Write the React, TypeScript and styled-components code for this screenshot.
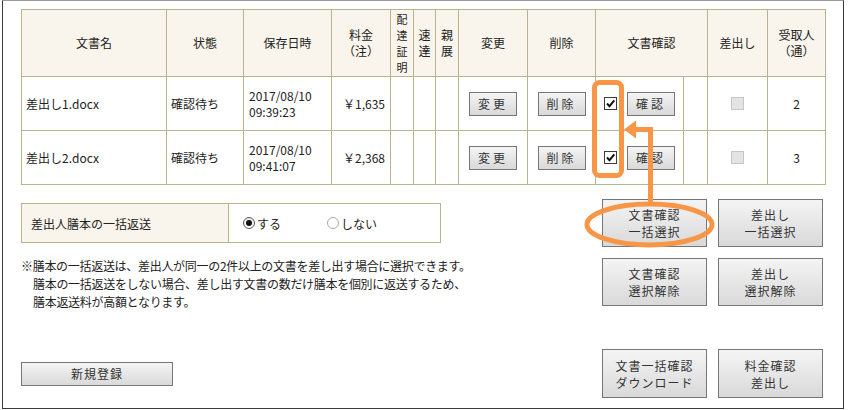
import React from "react";
import styled, { createGlobalStyle } from "styled-components";

const B = "#b9b48f";
const CREAM = "#f9f5ec";
const ORANGE = "#f79646";

const GlobalStyle = createGlobalStyle`
  html, body { margin: 0; padding: 0; background: #fff; }
  body {
    font-family: "Noto Sans CJK JP", "Noto Sans", sans-serif;
    font-size: 12px;
    color: #222;
  }
  * { box-sizing: border-box; }
`;

const Page = styled.div`
  position: relative;
  width: 848px;
  height: 410px;
  overflow: hidden;
`;

const Frame = styled.div`
  margin-left: 2px;
  width: 842px;
  height: 409px;
  border: 1px solid #3a3a3a;
  border-top-color: #9a9a9a;
  padding: 8px 17px 10px 18px;
  display: flex;
  flex-direction: column;
`;

const Grid = styled.div`
  display: grid;
  grid-template-columns: 145px 77px 88px 59px 23px 22px 23px 69px 68px 88px 24px 60px 58px;
  grid-template-rows: 67px 54px 54px;
  border-top: 1px solid ${B};
  border-left: 1px solid ${B};
  width: 805px;
`;

const Cell = styled.div<{ $align?: "left" | "center" | "right"; $pl?: number; $pr?: number }>`
  border-right: 1px solid ${B};
  border-bottom: 1px solid ${B};
  display: flex;
  align-items: center;
  justify-content: ${(p) =>
    p.$align === "right" ? "flex-end" : p.$align === "center" ? "center" : "flex-start"};
  padding-left: ${(p) => p.$pl ?? 0}px;
  padding-right: ${(p) => p.$pr ?? 0}px;
  line-height: 16px;
  white-space: nowrap;
`;

const HeadCell = styled.div<{ $span?: number; $small?: boolean }>`
  grid-column: span ${(p) => p.$span ?? 1};
  border-right: 1px solid ${B};
  border-bottom: 1px solid ${B};
  background: ${CREAM};
  display: flex;
  align-items: center;
  justify-content: center;
  text-align: center;
  font-size: ${(p) => (p.$small ? 11 : 12)}px;
  line-height: 16px;
  white-space: nowrap;
`;

const Btn = styled.button<{ $w: number; $h: number; $ls?: number }>`
  width: ${(p) => p.$w}px;
  height: ${(p) => p.$h}px;
  padding: 0;
  border: 1px solid #767676;
  background: linear-gradient(#f4f4f4, #d9d9d9);
  font-family: inherit;
  font-size: 12px;
  line-height: 17px;
  letter-spacing: ${(p) => p.$ls ?? 1}px;
  color: #333;
  flex-shrink: 0;
`;

const CheckBox = styled.span<{ $disabled?: boolean }>`
  width: 13px;
  height: 13px;
  display: inline-flex;
  align-items: center;
  justify-content: center;
  border: 1px solid ${(p) => (p.$disabled ? "#c6c6c6" : "#3c3c3c")};
  background: ${(p) => (p.$disabled ? "#e4e4e4" : "#fff")};
  flex-shrink: 0;
`;

const ConfirmCell = styled(Cell)`
  gap: 10px;
`;

const Lower = styled.div`
  display: flex;
  justify-content: space-between;
  margin-top: 14px;
`;

const LeftCol = styled.div`
  padding-top: 4px;
  display: flex;
  flex-direction: column;
`;

const OptionBox = styled.div`
  display: grid;
  grid-template-columns: 207px 1fr;
  width: 420px;
  height: 40px;
  border: 1px solid ${B};
`;

const OptionLabel = styled.div`
  background: ${CREAM};
  border-right: 1px solid ${B};
  display: flex;
  align-items: center;
  padding-left: 9px;
`;

const OptionChoices = styled.div`
  display: flex;
  align-items: center;
  padding-left: 14px;
  gap: 46px;
`;

const RadioItem = styled.label`
  display: inline-flex;
  align-items: center;
  gap: 2px;
`;

const RadioDot = styled.span<{ $on?: boolean }>`
  width: 12px;
  height: 12px;
  border-radius: 50%;
  border: 1px solid ${(p) => (p.$on ? "#5a5a5a" : "#a8a8a8")};
  background: ${(p) => (p.$on ? "linear-gradient(#e8e8e8, #fff)" : "#fff")};
  display: inline-flex;
  align-items: center;
  justify-content: center;
  &::after {
    content: "";
    width: 6px;
    height: 6px;
    border-radius: 50%;
    background: ${(p) => (p.$on ? "#111" : "transparent")};
  }
`;

const Note = styled.div`
  margin-top: 14px;
  line-height: 18px;
  letter-spacing: -0.3px;
  color: #222;
`;

const NoteLine = styled.div<{ $indent?: boolean }>`
  padding-left: ${(p) => (p.$indent ? 12 : 0)}px;
  white-space: nowrap;
`;

const ButtonGrid = styled.div`
  display: grid;
  grid-template-columns: 105px 105px;
  grid-auto-rows: 48px;
  column-gap: 11px;
  row-gap: 11px;
  margin-right: 3px;
`;

const BottomRow = styled.div`
  margin-top: auto;
  display: flex;
  align-items: center;
  justify-content: space-between;
`;

const BottomButtons = styled.div`
  display: flex;
  gap: 11px;
  margin-right: 3px;
`;

const Overlay = styled.svg`
  position: absolute;
  left: 0;
  top: 0;
  pointer-events: none;
`;

const Check = () => (
  <CheckBox>
    <svg width="11" height="11" viewBox="0 0 11 11">
      <path d="M2 5.5 L4.5 8.2 L9.3 2.3" fill="none" stroke="#111" strokeWidth="1.9" />
    </svg>
  </CheckBox>
);

const rows = [
  { name: "差出し1.docx", date: "2017/08/10", time: "09:39:23", price: "￥1,635", count: "2" },
  { name: "差出し2.docx", date: "2017/08/10", time: "09:41:07", price: "￥2,368", count: "3" },
];

export default function App() {
  return (
    <Page>
      <GlobalStyle />
      <Frame>
        <Grid>
          <HeadCell>文書名</HeadCell>
          <HeadCell>状態</HeadCell>
          <HeadCell>保存日時</HeadCell>
          <HeadCell>
            料金
            <br />
            （注）
          </HeadCell>
          <HeadCell $small>
            配<br />達<br />証<br />明
          </HeadCell>
          <HeadCell>
            速<br />達
          </HeadCell>
          <HeadCell>
            親<br />展
          </HeadCell>
          <HeadCell>変更</HeadCell>
          <HeadCell>削除</HeadCell>
          <HeadCell $span={2}>文書確認</HeadCell>
          <HeadCell>差出し</HeadCell>
          <HeadCell>
            受取人
            <br />
            （通）
          </HeadCell>
          {rows.map((r) => (
            <React.Fragment key={r.name}>
              <Cell $pl={4}>{r.name}</Cell>
              <Cell $pl={4}>確認待ち</Cell>
              <Cell $pl={5}>
                <div>
                  {r.date}
                  <br />
                  {r.time}
                </div>
              </Cell>
              <Cell $align="right" $pr={5}>
                {r.price}
              </Cell>
              <Cell />
              <Cell />
              <Cell />
              <Cell $align="center">
                <Btn $w={48} $h={24} $ls={3}>
                  変更
                </Btn>
              </Cell>
              <Cell $align="center">
                <Btn $w={48} $h={24} $ls={3}>
                  削除
                </Btn>
              </Cell>
              <ConfirmCell $pl={8}>
                <Check />
                <Btn $w={48} $h={24} $ls={3}>
                  確認
                </Btn>
              </ConfirmCell>
              <Cell />
              <Cell $align="center">
                <CheckBox $disabled />
              </Cell>
              <Cell $align="center">{r.count}</Cell>
            </React.Fragment>
          ))}
        </Grid>

        <Lower>
          <LeftCol>
            <OptionBox>
              <OptionLabel>差出人膳本の一括返送</OptionLabel>
              <OptionChoices>
                <RadioItem>
                  <RadioDot $on />
                  する
                </RadioItem>
                <RadioItem>
                  <RadioDot />
                  しない
                </RadioItem>
              </OptionChoices>
            </OptionBox>
            <Note>
              <NoteLine>※膳本の一括返送は、差出人が同一の2件以上の文書を差し出す場合に選択できます。</NoteLine>
              <NoteLine $indent>膳本の一括返送をしない場合、差し出す文書の数だけ膳本を個別に返送するため、</NoteLine>
              <NoteLine $indent>膳本返送料が高額となります。</NoteLine>
            </Note>
          </LeftCol>
          <ButtonGrid>
            <Btn $w={105} $h={48}>
              文書確認
              <br />
              一括選択
            </Btn>
            <Btn $w={105} $h={48}>
              差出し
              <br />
              一括選択
            </Btn>
            <Btn $w={105} $h={48}>
              文書確認
              <br />
              選択解除
            </Btn>
            <Btn $w={105} $h={48}>
              差出し
              <br />
              選択解除
            </Btn>
          </ButtonGrid>
        </Lower>

        <BottomRow>
          <Btn $w={152} $h={24}>
            新規登録
          </Btn>
          <BottomButtons>
            <Btn $w={105} $h={49}>
              文書一括確認
              <br />
              ダウンロード
            </Btn>
            <Btn $w={105} $h={49}>
              料金確認
              <br />
              差出し
            </Btn>
          </BottomButtons>
        </BottomRow>
      </Frame>

      <Overlay width="848" height="410" viewBox="0 0 848 410">
        <rect
          x="594.5"
          y="82.5"
          width="27"
          height="93"
          rx="5"
          fill="none"
          stroke={ORANGE}
          strokeWidth="5"
        />
        <path d="M650.5 203 V129.5 H634" fill="none" stroke={ORANGE} strokeWidth="5" />
        <polygon points="624,129.5 636,120.5 636,138.5" fill={ORANGE} />
        <ellipse
          cx="649.5"
          cy="224.5"
          rx="62.5"
          ry="20.5"
          fill="none"
          stroke={ORANGE}
          strokeWidth="5"
        />
      </Overlay>
    </Page>
  );
}
